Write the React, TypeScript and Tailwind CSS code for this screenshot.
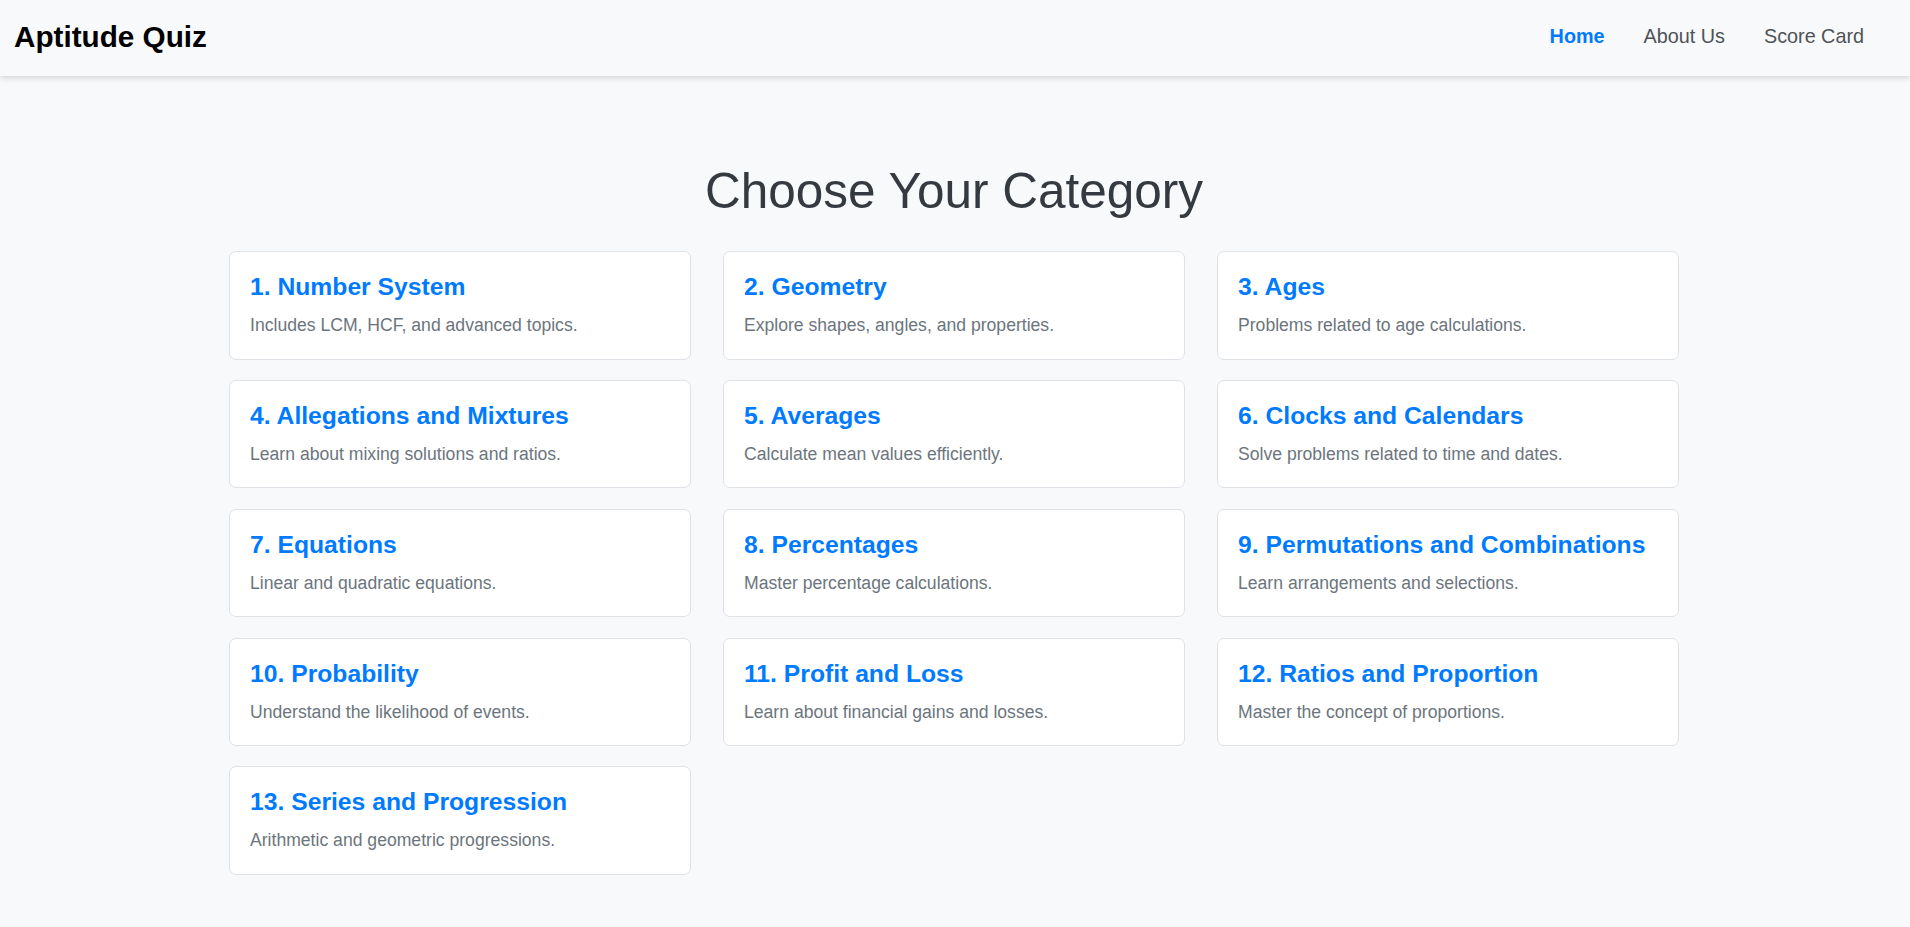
const CATEGORIES = [
  { title: "Number System", body: "Includes LCM, HCF, and advanced topics." },
  { title: "Geometry", body: "Explore shapes, angles, and properties." },
  { title: "Ages", body: "Problems related to age calculations." },
  { title: "Allegations and Mixtures", body: "Learn about mixing solutions and ratios." },
  { title: "Averages", body: "Calculate mean values efficiently." },
  { title: "Clocks and Calendars", body: "Solve problems related to time and dates." },
  { title: "Equations", body: "Linear and quadratic equations." },
  { title: "Percentages", body: "Master percentage calculations." },
  { title: "Permutations and Combinations", body: "Learn arrangements and selections." },
  { title: "Probability", body: "Understand the likelihood of events." },
  { title: "Profit and Loss", body: "Learn about financial gains and losses." },
  { title: "Ratios and Proportion", body: "Master the concept of proportions." },
  { title: "Series and Progression", body: "Arithmetic and geometric progressions." },
];

const NAV = [
  { label: "Home", active: true },
  { label: "About Us", active: false },
  { label: "Score Card", active: false },
];

export default function App() {
  return (
    <div className="min-h-[927px] bg-[#f8f9fa] font-['Liberation_Sans',Arial,sans-serif]">
      <nav className="flex h-[76px] items-center justify-between bg-[#f8f9fa] pb-[2px] pl-[14px] pr-[46px] shadow-[0_2px_6px_rgba(0,0,0,0.15)]">
        <span className="text-[29.7px] font-bold leading-none text-black">Aptitude Quiz</span>
        <ul className="flex items-center gap-[39px]">
          {NAV.map((n) => (
            <li key={n.label}>
              <a
                href="#"
                className={
                  n.active
                    ? "text-[19.8px] font-bold text-[#007bff]"
                    : "text-[19.8px] text-[#4f5357]"
                }
              >
                {n.label}
              </a>
            </li>
          ))}
        </ul>
      </nav>

      <main className="mx-auto w-[1452px] pb-10 pr-[2px] pt-[85px]">
        <h1 className="mb-[31px] text-center text-[49.5px] leading-[1.2] font-normal text-[#343a40]">
          Choose Your Category
        </h1>

        <div className="grid grid-cols-3 gap-x-[32px] gap-y-[20.5px]">
          {CATEGORIES.map((c, i) => (
            <div
              key={c.title}
              className="rounded-[7px] border border-[#dee2e6] bg-white p-[20px]"
            >
              <h3 className="text-[24.7px] font-bold leading-[1.25] text-[#007bff]">
                {i + 1}. {c.title}
              </h3>
              <p className="mt-[9px] text-[17.6px] leading-[1.5] text-[#6c757d]">{c.body}</p>
            </div>
          ))}
        </div>
      </main>
    </div>
  );
}
